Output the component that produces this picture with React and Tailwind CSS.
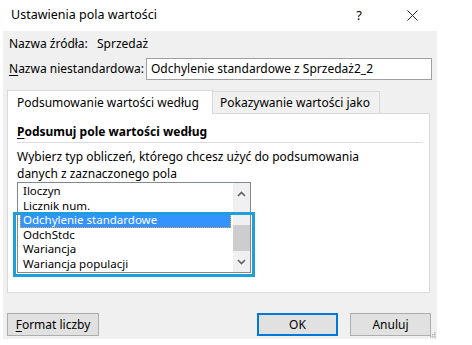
const items = [
  "Iloczyn",
  "Licznik num.",
  "Odchylenie standardowe",
  "OdchStdc",
  "Wariancja",
  "Wariancja populacji",
];

function ListBox() {
  return (
    <div className="ml-[9px] flex h-[91px] w-[234px] border border-[#828790] bg-white">
      <div className="flex-1 pt-px">
        {items.map((item, i) => (
          <div
            key={item}
            className={`mx-[2px] h-[14.6px] overflow-hidden pl-[3px] text-[11.5px] leading-[14.6px] ${
              i === 2
                ? "bg-[#3393ff] text-white outline-1 -outline-offset-1 outline-dotted outline-[#f0a050]"
                : "text-black"
            }`}
          >
            {item}
          </div>
        ))}
      </div>
      <div className="flex w-[17px] flex-col bg-[#f0f0f0]">
        <div className="flex h-[22px] items-center justify-center">
          <svg width="9" height="6" viewBox="0 0 9 6">
            <path d="M1 5 L4.5 1.5 L8 5" fill="none" stroke="#606060" strokeWidth="1.6" />
          </svg>
        </div>
        <div className="h-[20px]" />
        <div className="h-[26px] bg-[#cdcdcd]" />
        <div className="flex flex-1 items-center justify-center">
          <svg width="9" height="6" viewBox="0 0 9 6">
            <path d="M1 1 L4.5 4.5 L8 1" fill="none" stroke="#606060" strokeWidth="1.6" />
          </svg>
        </div>
      </div>
    </div>
  );
}

export default function App() {
  return (
    <div
      className="relative h-[345px] w-[472px] overflow-hidden bg-white text-[12px] text-black"
      style={{ fontFamily: '"Noto Sans", "Liberation Sans", sans-serif' }}
    >
      <div className="flex h-[31px] items-center pl-[11px] text-[12.5px]">
        <span>Ustawienia pola wartości</span>
        <span className="ml-auto mr-[45px] text-[13px]">?</span>
        <svg className="mr-[54px]" width="11" height="11" viewBox="0 0 11 11">
          <path d="M0.5 0.5 L10.5 10.5 M10.5 0.5 L0.5 10.5" stroke="#222" strokeWidth="1" />
        </svg>
      </div>

      <div className="relative ml-[3px] h-[308px] w-[434px] bg-[#f0f0f0] px-[4px]">
        <div className="box-content flex h-[16px] items-center pt-[5px] pl-[2px]">
          <span className="w-[88px]">Nazwa źródła:</span>
          <span>Sprzedaż</span>
        </div>

        <div className="mt-[6px] flex h-[22px] items-center pl-[2px]">
          <span className="w-[137px]">
            <u className="underline-offset-2">N</u>azwa niestandardowa:
          </span>
          <div className="flex h-[22px] w-[286px] items-center border border-[#a0a0a0] bg-white pl-[4px]">
            Odchylenie standardowe z Sprzedaż2_2
          </div>
        </div>

        <div className="mt-[9px] flex h-[24px] items-end">
          <div className="relative z-10 -mb-px flex h-[24px] w-[206px] items-center border border-b-0 border-[#d9d9d9] bg-white pl-[9px]">
            Podsumowanie wartości według
          </div>
          <div className="flex h-[22px] w-[167px] items-center border border-b-0 border-l-0 border-[#d9d9d9] bg-[#f0f0f0] pl-[7px]">
            Pokazywanie wartości jako
          </div>
        </div>

        <div className="h-[180px] w-[423px] border border-[#d9d9d9] bg-white pt-[10px]">
          <div className="ml-[9px] h-[16px] font-bold leading-[16px]">
            <u className="underline-offset-2">P</u>odsumuj pole wartości według
          </div>
          <div className="ml-[9px] mt-[2px] h-px w-[406px] bg-[#dcdcdc]" />
          <div className="ml-[9px] mt-[5px] leading-[17px]">
            <div>Wybierz typ obliczeń, którego chcesz użyć do podsumowania</div>
            <div>danych z zaznaczonego pola</div>
          </div>
          <ListBox />
        </div>

        <div className="mt-[20px] flex h-[23px] pr-[2px]">
          <button className="h-[23px] w-[92px] border border-[#adadad] bg-[#e1e1e1]">
            <u className="underline-offset-2">F</u>ormat liczby
          </button>
          <button className="ml-auto h-[23px] w-[81px] border-2 border-[#0078d7] bg-[#e1e1e1]">
            OK
          </button>
          <button className="ml-[12px] h-[23px] w-[81px] border border-[#adadad] bg-[#e1e1e1]">
            Anuluj
          </button>
        </div>

        <svg className="absolute bottom-[1px] right-[1px]" width="6" height="6" viewBox="0 0 6 6">
          <rect x="4" y="0" width="1.5" height="1.5" fill="#b8b8b8" />
          <rect x="2" y="2" width="1.5" height="1.5" fill="#b8b8b8" />
          <rect x="4" y="2" width="1.5" height="1.5" fill="#b8b8b8" />
          <rect x="0" y="4" width="1.5" height="1.5" fill="#b8b8b8" />
          <rect x="2" y="4" width="1.5" height="1.5" fill="#b8b8b8" />
          <rect x="4" y="4" width="1.5" height="1.5" fill="#b8b8b8" />
        </svg>
      </div>

      <div className="pointer-events-none absolute left-[13px] top-[212px] h-[65px] w-[242px] border-[3px] border-[#1e9fdb]" />
    </div>
  );
}
